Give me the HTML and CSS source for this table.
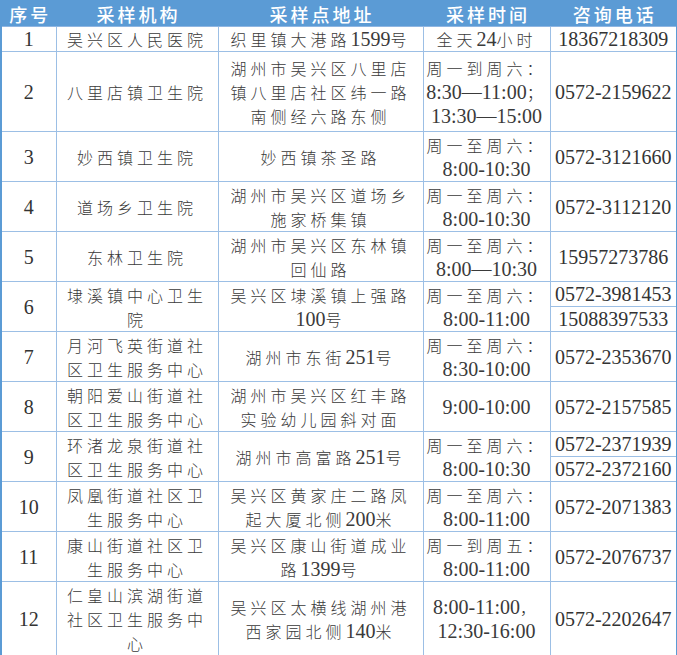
FILE: index.html
```html
<!DOCTYPE html>
<html lang="zh-CN">
<head>
<meta charset="utf-8">
<title>采样点信息</title>
<link rel="stylesheet" href="styles.css">
</head>
<body>
<table class="sites">
  <colgroup>
    <col class="c-no"><col class="c-org"><col class="c-addr"><col class="c-time"><col class="c-tel">
  </colgroup>
  <thead>
    <tr class="head"><th>序号</th><th>采样机构</th><th>采样点地址</th><th>采样时间</th><th>咨询电话</th></tr>
  </thead>
  <tbody>
    <tr class="r1">
      <td class="no">1</td><td>吴兴区人民医院</td><td>织里镇大港路<span class="n">1599</span>号</td>
      <td class="time">全天<span class="n">24</span>小时</td><td class="tel">18367218309</td>
    </tr>
    <tr class="r3">
      <td class="no">2</td><td>八里店镇卫生院</td><td>湖州市吴兴区八里店镇八里店社区纬一路南侧经六路东侧</td>
      <td class="time">周一到周六：<br><span class="n">8:30—11:00</span>；<br><span class="n">13:30—15:00</span></td><td class="tel">0572-2159622</td>
    </tr>
    <tr class="r2">
      <td class="no">3</td><td>妙西镇卫生院</td><td>妙西镇茶圣路</td>
      <td class="time">周一至周六：<br><span class="n">8:00-10:30</span></td><td class="tel">0572-3121660</td>
    </tr>
    <tr class="r2">
      <td class="no">4</td><td>道场乡卫生院</td><td>湖州市吴兴区道场乡施家桥集镇</td>
      <td class="time">周一至周六：<br><span class="n">8:00-10:30</span></td><td class="tel">0572-3112120</td>
    </tr>
    <tr class="r2">
      <td class="no">5</td><td>东林卫生院</td><td>湖州市吴兴区东林镇回仙路</td>
      <td class="time">周一至周六：<br><span class="n">8:00—10:30</span></td><td class="tel">15957273786</td>
    </tr>
    <tr class="r2">
      <td class="no">6</td><td>埭溪镇中心卫生院</td><td>吴兴区埭溪镇上强路<span class="n">100</span>号</td>
      <td class="time">周一至周六：<br><span class="n">8:00-11:00</span></td>
      <td class="tel split"><div class="half">0572-3981453</div><div class="half lower">15088397533</div></td>
    </tr>
    <tr class="r2">
      <td class="no">7</td><td>月河飞英街道社区卫生服务中心</td><td>湖州市东街<span class="n">251</span>号</td>
      <td class="time">周一至周六：<br><span class="n">8:30-10:00</span></td><td class="tel">0572-2353670</td>
    </tr>
    <tr class="r2">
      <td class="no">8</td><td>朝阳爱山街道社区卫生服务中心</td><td>湖州市吴兴区红丰路实验幼儿园斜对面</td>
      <td class="time"><span class="n">9:00-10:00</span></td><td class="tel">0572-2157585</td>
    </tr>
    <tr class="r2">
      <td class="no">9</td><td>环渚龙泉街道社区卫生服务中心</td><td>湖州市高富路<span class="n">251</span>号</td>
      <td class="time">周一至周六：<br><span class="n">8:00-10:30</span></td>
      <td class="tel split"><div class="half">0572-2371939</div><div class="half lower">0572-2372160</div></td>
    </tr>
    <tr class="r2">
      <td class="no">10</td><td>凤凰街道社区卫生服务中心</td><td>吴兴区黄家庄二路凤起大厦北侧<span class="n">200</span>米</td>
      <td class="time">周一至周六：<br><span class="n">8:00-11:00</span></td><td class="tel">0572-2071383</td>
    </tr>
    <tr class="r2">
      <td class="no">11</td><td>康山街道社区卫生服务中心</td><td>吴兴区康山街道成业路<span class="n">1399</span>号</td>
      <td class="time">周一到周五：<br><span class="n">8:00-11:00</span></td><td class="tel">0572-2076737</td>
    </tr>
    <tr class="r3b">
      <td class="no">12</td><td>仁皇山滨湖街道社区卫生服务中心</td><td>吴兴区太横线湖州港西家园北侧<span class="n">140</span>米</td>
      <td class="time"><span class="n">8:00-11:00</span>，<br><span class="n">12:30-16:00</span></td><td class="tel">0572-2202647</td>
    </tr>
  </tbody>
</table>
</body>
</html>
```
FILE: styles.css
```css
html, body {
  margin: 0;
  padding: 0;
  background: #ffffff;
}

.sites {
  border-collapse: collapse;
  table-layout: fixed;
  width: 676px;
  font-family: "Noto Sans CJK SC", sans-serif;
  font-size: 16px;
  font-weight: 300;
  letter-spacing: 4px;
  color: #3a3a3a;
  border: 2px solid #5b9bd5;
}

.c-no { width: 55px; }
.c-org { width: 162px; }
.c-addr { width: 205px; }
.c-time { width: 127px; }
.c-tel { width: 127px; }

.sites th {
  background: #5b9bd5;
  color: #ffffff;
  font-size: 18px;
  font-weight: 500;
  letter-spacing: 3px;
  line-height: 24px;
  height: 24px;
  padding: 0 0 0 3px;
  border: 1px solid #5b9bd5;
  border-bottom-color: #8fb6e2;
}

.sites td {
  border: 1px solid #9cbfe5;
  text-align: center;
  vertical-align: middle;
  line-height: 24px;
  padding: 0 5px;
}

.r1 td { height: 24px; }
.r2 td { height: 49px; }
.r3 td { height: 79px; }
.r3b td { height: 73px; }

.sites td.time { padding: 0; }

.sites td.no,
.sites td.tel,
.n {
  font-family: "Liberation Serif", serif;
  font-size: 20px;
  font-weight: 400;
  letter-spacing: 0;
}

.n {
  line-height: 24px;
  vertical-align: top;
}

.sites td.tel { padding: 0; color: #333333; }
.sites td.no { padding: 0; color: #333333; }

.sites td.split {
  vertical-align: top;
}

.half {
  height: 24px;
  line-height: 24px;
}

.half.lower {
  border-top: 1px solid #9cbfe5;
}
```
